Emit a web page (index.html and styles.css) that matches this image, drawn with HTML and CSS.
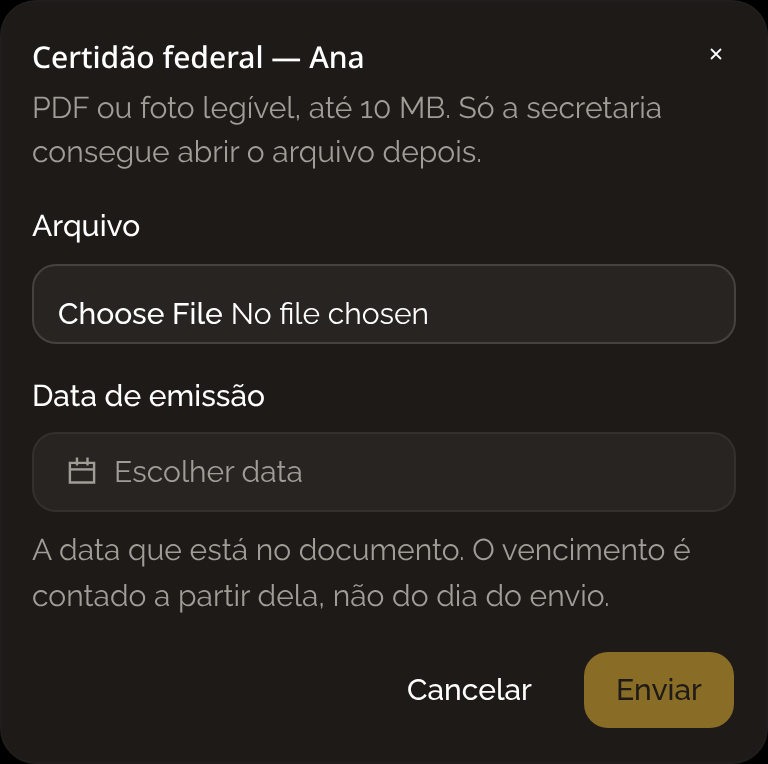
FILE: index.html
```html
<!DOCTYPE html>
<html lang="pt-BR">
<head>
    <meta charset="UTF-8">
    <meta name="viewport" content="width=device-width, initial-scale=1.0">
    <title>Certidão federal — Ana</title>
    <link rel="stylesheet" href="styles.css">
</head>
<body>
    <div class="dialog">
        <div class="dialog-header">
            <h2>Certidão federal — Ana</h2>
            <button class="close-btn" type="button" aria-label="Fechar">
                <svg width="12" height="12" viewBox="0 0 12 12" fill="none" stroke="#ffffff" stroke-width="1.8">
                    <path d="M1 1 L11 11 M11 1 L1 11"/>
                </svg>
            </button>
        </div>
        <p class="description">PDF ou foto legível, até 10 MB. Só a secretaria consegue abrir o arquivo depois.</p>

        <label class="field-label" for="arquivo">Arquivo</label>
        <input class="file-input" type="file" id="arquivo">

        <label class="field-label date-label">Data de emissão</label>
        <button class="date-btn" type="button">
            <svg width="28" height="28" viewBox="0 0 28 28" fill="none" stroke="#a09c96" stroke-width="2.4">
                <path d="M1.9 5.9 H26.1 V25.5 H1.9 Z"/>
                <path d="M1.9 12.4 H26.1"/>
                <path d="M9 0.5 V8.5 M19.5 0.5 V8.5"/>
            </svg>
            <span>Escolher data</span>
        </button>
        <p class="hint">A data que está no documento. O vencimento é contado a partir dela, não do dia do envio.</p>

        <div class="actions">
            <button class="btn-cancel" type="button">Cancelar</button>
            <button class="btn-send" type="button">Enviar</button>
        </div>
    </div>
</body>
</html>
```

FILE: styles.css
```css
* {
    box-sizing: border-box;
}

body {
    margin: 0;
    background-color: #000000;
    font-family: Raleway, Lato, sans-serif;
    text-rendering: geometricPrecision;
}

.dialog {
    width: 768px;
    height: 764px;
    padding: 34px 30px 0 30px;
    background-color: #1d1a18;
    border: 2px solid #201e1c;
    border-radius: 36px;
    color: #ffffff;
    display: flex;
    flex-direction: column;
    will-change: transform;
}

.dialog-header {
    display: flex;
    justify-content: space-between;
    align-items: flex-start;
}

.dialog-header h2 {
    margin: 0;
    font-family: "Noto Sans", sans-serif;
    font-size: 30px;
    font-weight: 500;
    line-height: 41px;
}

.close-btn {
    background: none;
    border: none;
    padding: 0;
    margin: 12px 12px 0 0;
    width: 14px;
    height: 12px;
    display: flex;
    cursor: pointer;
}

.description,
.hint {
    margin: 0;
    font-size: 30px;
    line-height: 44px;
    color: #a09c96;
}

.description {
    margin-top: 10px;
    height: 88px;
}

.field-label {
    display: block;
    margin-top: 30px;
    font-size: 30px;
    font-weight: 500;
    line-height: 44px;
}

.date-label {
    margin-top: 31px;
}

.file-input {
    display: block;
    width: 704px;
    height: 80px;
    margin-top: 15px;
    padding: 30px 24px 0 24px;
    background-color: #272422;
    border: 2px solid #46433f;
    border-radius: 24px;
    color: #ffffff;
    font-family: inherit;
    font-size: 30px;
}

.file-input::file-selector-button {
    margin-right: 8px;
    padding: 0;
    background: none;
    border: none;
    color: #ffffff;
    font-family: inherit;
    font-size: 30px;
    font-weight: 500;
}

.date-btn {
    display: flex;
    align-items: center;
    gap: 18px;
    width: 704px;
    height: 80px;
    margin-top: 13px;
    padding: 0 34px 2px 34px;
    background-color: #272422;
    border: 2px solid #33302d;
    border-radius: 24px;
    color: #a09c96;
    font-family: inherit;
    font-size: 30px;
}

.hint {
    margin-top: 16px;
    line-height: 46px;
}

.actions {
    display: flex;
    justify-content: flex-end;
    align-items: center;
    gap: 52px;
    margin-top: 32px;
    padding-right: 2px;
}

.btn-cancel,
.btn-send {
    border: none;
    background: none;
    padding: 0 0 2px 0;
    font-family: inherit;
    font-size: 30px;
    font-weight: 500;
}

.btn-cancel {
    color: #ffffff;
}

.btn-send {
    width: 150px;
    height: 76px;
    background-color: #896c26;
    border-radius: 24px;
    color: #1d1a18;
}
```
